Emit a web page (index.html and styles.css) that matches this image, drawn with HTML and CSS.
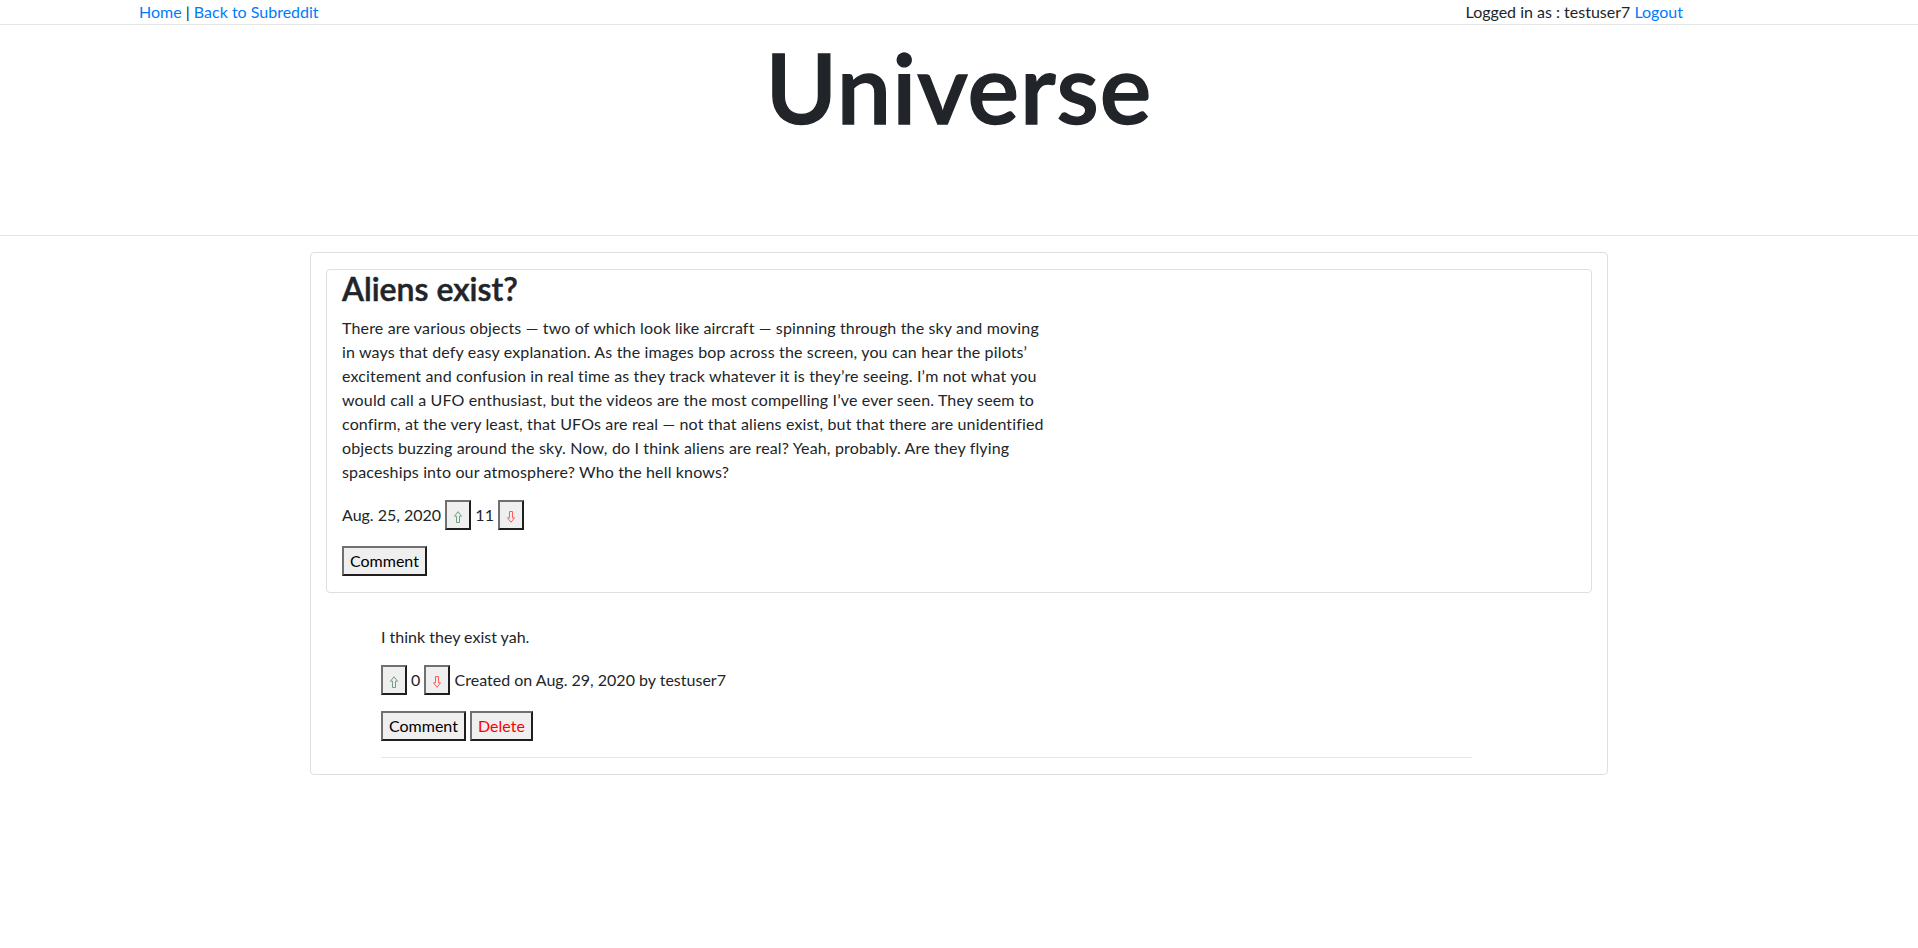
FILE: index.html
```html
<!DOCTYPE html>
<html lang="en">
<head>
<meta charset="utf-8">
<title>Aliens exist? - Universe</title>
<link rel="stylesheet" href="styles.css">
</head>
<body>
<nav class="topbar">
  <div class="nav-left"><a href="#">Home</a> | <a href="#">Back to Subreddit</a></div>
  <div class="nav-right">Logged in as : testuser7 <a href="#">Logout</a></div>
</nav>
<header class="masthead">
  <h1 class="site-title">Universe</h1>
</header>
<main class="thread">
  <article class="post-card">
    <h2 class="post-title">Aliens exist?</h2>
    <p class="post-body">There are various objects — two of which look like aircraft — spinning through the sky and moving in ways that defy easy explanation. As the images bop across the screen, you can hear the pilots’ excitement and confusion in real time as they track whatever it is they’re seeing. I’m not what you would call a UFO enthusiast, but the videos are the most compelling I’ve ever seen. They seem to confirm, at the very least, that UFOs are real — not that aliens exist, but that there are unidentified objects buzzing around the sky. Now, do I think aliens are real? Yeah, probably. Are they flying spaceships into our atmosphere? Who the hell knows?</p>
    <div class="meta-row">Aug. 25, 2020 <button class="btn vote up"><svg viewBox="0 0 10 12" width="10" height="12"><path d="M5 0.7 L8.5 5.2 H6.5 V11.5 H3.5 V5.2 H1.5 Z"/></svg></button> 11 <button class="btn vote down"><svg viewBox="0 0 10 12" width="10" height="12"><path d="M5 11.3 L8.5 6.8 H6.5 V0.5 H3.5 V6.8 H1.5 Z"/></svg></button></div>
    <div class="action-row"><button class="btn">Comment</button></div>
  </article>
  <section class="comments">
    <div class="comment">
      <p class="comment-body">I think they exist yah.</p>
      <div class="meta-row"><button class="btn vote up"><svg viewBox="0 0 10 12" width="10" height="12"><path d="M5 0.7 L8.5 5.2 H6.5 V11.5 H3.5 V5.2 H1.5 Z"/></svg></button> 0 <button class="btn vote down"><svg viewBox="0 0 10 12" width="10" height="12"><path d="M5 11.3 L8.5 6.8 H6.5 V0.5 H3.5 V6.8 H1.5 Z"/></svg></button> Created on Aug. 29, 2020 by testuser7</div>
      <div class="action-row"><button class="btn">Comment</button> <button class="btn danger">Delete</button></div>
      <hr class="comment-rule">
    </div>
  </section>
</main>
</body>
</html>
```
FILE: styles.css
```css
* { box-sizing: border-box; }

html, body {
  margin: 0;
  background: #fff;
}

body {
  font-family: "Lato", "Noto Sans", sans-serif;
  font-size: 16px;
  line-height: 1.5;
  color: #212529;
}

a {
  color: #007bff;
  text-decoration: none;
}

/* top navigation */
.topbar {
  display: flex;
  justify-content: space-between;
  height: 25px;
  padding: 0 235px 0 139px;
  border-bottom: 1px solid #e5e5e5;
}

/* masthead */
.masthead {
  padding: 4px 0 0;
  height: 211px;
  border-bottom: 1px solid #e5e5e5;
}

.site-title {
  margin: 0;
  text-align: center;
  font-size: 97px;
  font-weight: 600;
  line-height: 1.2;
  letter-spacing: 1px;
  color: #212529;
  -webkit-text-stroke: 1.4px #212529;
}

/* thread */
.thread {
  width: 1298px;
  margin: 16px auto 0;
  padding: 16px 15px 0;
  border: 1px solid #dfdfdf;
  border-radius: 4px;
}

.post-card {
  border: 1px solid #dfdfdf;
  border-radius: 4px;
  padding: 0 15px;
}

.post-title {
  margin: 0 0 8px;
  font-size: 32px;
  font-weight: 600;
  line-height: 1.2;
  -webkit-text-stroke: 0.5px #212529;
}

.post-body {
  width: 707px;
  margin: 0 0 16px;
  letter-spacing: 0.15px;
}

.meta-row,
.action-row {
  margin: 0 0 16px;
  line-height: 24px;
}

.btn {
  font-family: inherit;
  font-size: 16px;
  line-height: 24px;
  color: #000;
  background: #efefef;
  border: 2px solid;
  border-color: #707070 #1e1e1e #1e1e1e #707070;
  border-radius: 0;
  padding: 1px 6px;
  margin: 0;
  vertical-align: baseline;
}

.btn.danger {
  color: #ff0000;
}

.vote svg {
  display: inline-block;
  vertical-align: -2px;
  fill: none;
  stroke-width: 1;
}

.vote.up svg { stroke: #6f9f7e; }
.vote.down svg { stroke: #ff5c5c; }

/* comments */
.comments {
  padding-top: 32px;
}

.comment {
  width: 1091px;
  margin-left: 55px;
}

.comment-body {
  margin: 0 0 16px;
}

.comment-rule {
  margin: 16px 0;
  border: 0;
  border-top: 1px solid #e5e5e5;
}
```
